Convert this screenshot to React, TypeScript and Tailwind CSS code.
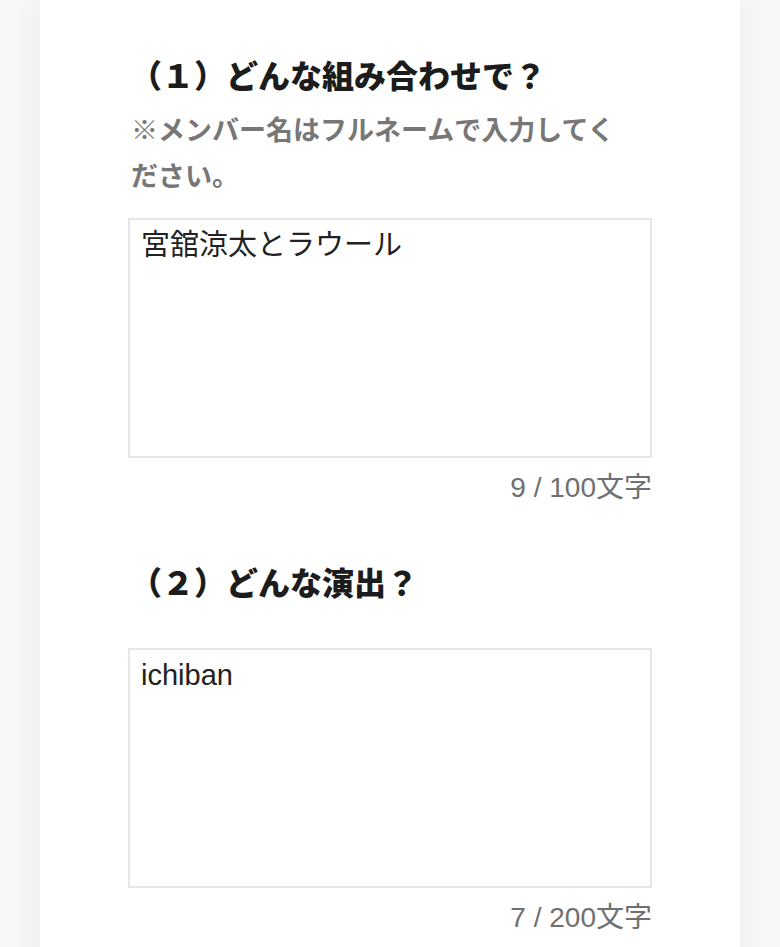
const jp = "font-['Hiragino_Kaku_Gothic_ProN','Liberation_Sans','Noto_Sans_CJK_JP',sans-serif]";

type Field = {
  title: string;
  note?: string;
  value: string;
  max: number;
};

const fields: Field[] = [
  {
    title: "（１）どんな組み合わせで？",
    note: "※メンバー名はフルネームで入力してください。",
    value: "宮舘涼太とラウール",
    max: 100,
  },
  {
    title: "（２）どんな演出？",
    value: "ichiban",
    max: 200,
  },
];

const FieldBlock = ({ field, first }: { field: Field; first: boolean }) => (
  <section className={first ? "" : "mt-[56px]"}>
    <h2 className="pl-[2px] text-[32px] font-black leading-[44px] text-[#1c1c1c]">{field.title}</h2>
    {field.note ? (
      <p className="mt-[9px] pl-[3px] pr-[24px] text-[27px] font-bold leading-[46px] text-[#777]">{field.note}</p>
    ) : (
      <div className="h-[24px]" />
    )}
    <textarea
      readOnly
      value={field.value}
      className={`mt-[18px] block h-[240px] w-full resize-none border-2 border-[#e6e6e6] bg-white px-[11px] pt-[6px] text-[29px] leading-[38px] text-[#222] outline-none ${jp}`}
    />
    <p className="mt-[12px] text-right text-[28px] leading-[36px] text-[#707070]">
      {field.value.length} / {field.max}文字
    </p>
  </section>
);

export default function App() {
  return (
    <div className={`min-h-[947px] w-[780px] overflow-hidden bg-[#f7f7f7] ${jp}`}>
      <div className="mx-[40px] min-h-[947px] bg-white px-[88px] pt-[55px] pb-[40px] shadow-[0_0_30px_rgba(0,0,0,0.05)]">
        {fields.map((field, i) => (
          <FieldBlock key={field.title} field={field} first={i === 0} />
        ))}
      </div>
    </div>
  );
}
